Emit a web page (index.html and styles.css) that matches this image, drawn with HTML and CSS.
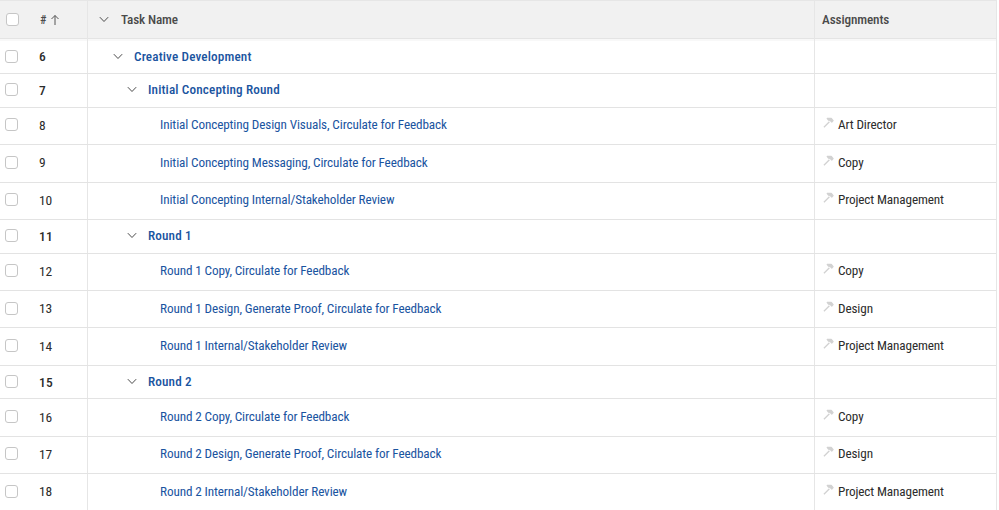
FILE: index.html
```html
<!DOCTYPE html>
<html lang="en">
<head>
<meta charset="utf-8">
<title>Tasks</title>
<link rel="stylesheet" href="styles.css">
</head>
<body>
<svg class="defs" width="0" height="0" aria-hidden="true">
  <symbol id="chev" viewBox="0 0 12 8"><path d="M1 1.2 6 6.4 11 1.2" fill="none" stroke="#4b4b4b" stroke-width="1.2"/></symbol>
  <symbol id="hammer" viewBox="0 0 12 12"><path d="M1 11.2 7 5.2M4.6 1.6H9L11 4 9.6 5.4 8 3.8 6 3.4Z" fill="#d2d2d2" stroke="#d2d2d2" stroke-width="1.4" stroke-linejoin="round"/></symbol>
</svg>
<div class="table">
  <div class="row head">
    <div class="c-check"><span class="box"></span></div>
    <div class="c-num">#<svg class="arrow" width="10" height="12" viewBox="0 0 10 12"><path d="M5 11V1.5M1.5 5 5 1.5 8.5 5" fill="none" stroke="#555" stroke-width="1"/></svg></div>
    <div class="c-name"><svg class="chev"><use href="#chev"/></svg><span class="head-title">Task Name</span></div>
    <div class="c-assign">Assignments</div>
  </div>

  <div class="row group"><div class="c-check"><span class="box"></span></div><div class="c-num">6</div><div class="c-name lvl1"><svg class="chev"><use href="#chev"/></svg><a>Creative Development</a></div><div class="c-assign"></div></div>
  <div class="row group"><div class="c-check"><span class="box"></span></div><div class="c-num">7</div><div class="c-name lvl2"><svg class="chev"><use href="#chev"/></svg><a>Initial Concepting Round</a></div><div class="c-assign"></div></div>
  <div class="row task"><div class="c-check"><span class="box"></span></div><div class="c-num">8</div><div class="c-name lvl3"><a>Initial Concepting Design Visuals, Circulate for Feedback</a></div><div class="c-assign"><svg class="hammer"><use href="#hammer"/></svg>Art Director</div></div>
  <div class="row task"><div class="c-check"><span class="box"></span></div><div class="c-num">9</div><div class="c-name lvl3"><a>Initial Concepting Messaging, Circulate for Feedback</a></div><div class="c-assign"><svg class="hammer"><use href="#hammer"/></svg>Copy</div></div>
  <div class="row task"><div class="c-check"><span class="box"></span></div><div class="c-num">10</div><div class="c-name lvl3"><a>Initial Concepting Internal/Stakeholder Review</a></div><div class="c-assign"><svg class="hammer"><use href="#hammer"/></svg>Project Management</div></div>
  <div class="row group"><div class="c-check"><span class="box"></span></div><div class="c-num">11</div><div class="c-name lvl2"><svg class="chev"><use href="#chev"/></svg><a>Round 1</a></div><div class="c-assign"></div></div>
  <div class="row task"><div class="c-check"><span class="box"></span></div><div class="c-num">12</div><div class="c-name lvl3"><a>Round 1 Copy, Circulate for Feedback</a></div><div class="c-assign"><svg class="hammer"><use href="#hammer"/></svg>Copy</div></div>
  <div class="row task"><div class="c-check"><span class="box"></span></div><div class="c-num">13</div><div class="c-name lvl3"><a>Round 1 Design, Generate Proof, Circulate for Feedback</a></div><div class="c-assign"><svg class="hammer"><use href="#hammer"/></svg>Design</div></div>
  <div class="row task"><div class="c-check"><span class="box"></span></div><div class="c-num">14</div><div class="c-name lvl3"><a>Round 1 Internal/Stakeholder Review</a></div><div class="c-assign"><svg class="hammer"><use href="#hammer"/></svg>Project Management</div></div>
  <div class="row group"><div class="c-check"><span class="box"></span></div><div class="c-num">15</div><div class="c-name lvl2"><svg class="chev"><use href="#chev"/></svg><a>Round 2</a></div><div class="c-assign"></div></div>
  <div class="row task"><div class="c-check"><span class="box"></span></div><div class="c-num">16</div><div class="c-name lvl3"><a>Round 2 Copy, Circulate for Feedback</a></div><div class="c-assign"><svg class="hammer"><use href="#hammer"/></svg>Copy</div></div>
  <div class="row task"><div class="c-check"><span class="box"></span></div><div class="c-num">17</div><div class="c-name lvl3"><a>Round 2 Design, Generate Proof, Circulate for Feedback</a></div><div class="c-assign"><svg class="hammer"><use href="#hammer"/></svg>Design</div></div>
  <div class="row task"><div class="c-check"><span class="box"></span></div><div class="c-num">18</div><div class="c-name lvl3"><a>Round 2 Internal/Stakeholder Review</a></div><div class="c-assign"><svg class="hammer"><use href="#hammer"/></svg>Project Management</div></div>
</div>
</body>
</html>
```

FILE: styles.css
```css
* { box-sizing: border-box; }
html, body { margin: 0; height: 510px; overflow: hidden; background: #fff; }
body { font-family: "Roboto", "Open Sans", sans-serif; font-size: 13.2px; font-stretch: 75%; letter-spacing: -0.12px; color: #2c2c2c; }
.defs { position: absolute; }
.table { width: 997px; border-right: 1px solid #e6e6e6; }
.row { display: grid; grid-template-columns: 35px 53px 727px 1fr; align-items: stretch; border-bottom: 1px solid #e3e3e3; }
.row > div { display: flex; align-items: center; padding-bottom: 2px; }
.head { height: 40.6px; background: #f1f1f1; border-top: 1px solid #e6e6e6; border-bottom: 0; box-shadow: inset 0 -2px 0 #f8f8f8, inset 0 -3px 0 #e4e4e4; font-weight: 500; color: #4a4a4a; }
.group { height: 33.6px; font-weight: 500; letter-spacing: 0.14px; }
.group > div { padding-bottom: 1px; }
.task { height: 37.4px; }
.c-check { padding-left: 5px; }
.head .c-check { padding-left: 6px; }
.box { width: 13px; height: 13px; border: 1.5px solid #c6c6c6; border-radius: 3px; background: #fff; }
.c-num { padding-left: 4px; border-right: 1px solid #e6e6e6; font-size: 13.5px; }
.head .c-num { padding-left: 5px; gap: 4px; font-size: 12px; }
.c-name { padding-left: 11px; border-right: 1px solid #e6e6e6; }
.head-title { margin-left: 12px; }
.chev { width: 10px; height: 7px; flex: none; margin-right: 11px; }
.head .chev { margin-right: 0; }
.lvl1 { padding-left: 25px; }
.lvl2 { padding-left: 39px; }
.lvl3 { padding-left: 72px; }
a { color: #1a549f; }
.c-assign { padding-left: 7px; }
.hammer { width: 11px; height: 11px; flex: none; margin-left: 1px; margin-right: 4px; margin-top: -4px; }
```
